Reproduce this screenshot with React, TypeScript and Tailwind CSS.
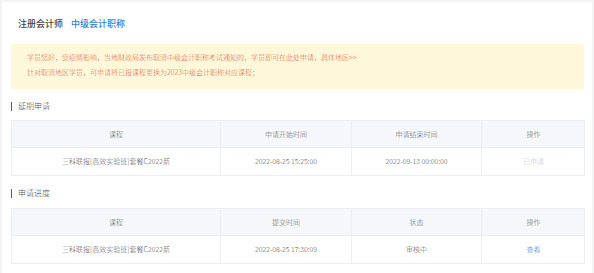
import React from "react";

const cols = "grid grid-cols-[209px_131px_130px_103px]";

function Table({
  headers,
  row,
  last,
}: {
  headers: string[];
  row: string[];
  last: React.ReactNode;
}) {
  return (
    <div className="border border-[#ebeef5] w-[574px]">
      <div className={`${cols} h-[27px] bg-[#f5f7fa] border-b border-[#ebeef5]`}>
        {headers.map((h, i) => (
          <div
            key={i}
            className={`flex items-center justify-center text-[7px] font-light text-[#666] ${
              i < 3 ? "border-r border-[#ebeef5]" : ""
            }`}
          >
            {h}
          </div>
        ))}
      </div>
      <div className={`${cols} h-[27px]`}>
        {row.map((c, i) => (
          <div
            key={i}
            className="flex items-center justify-center text-[7px] font-light text-[#555] border-r border-[#ebeef5]"
          >
            {c}
          </div>
        ))}
        <div className="flex items-center justify-center text-[7px] font-light">{last}</div>
      </div>
    </div>
  );
}

function Heading({ text }: { text: string }) {
  return (
    <div className="flex items-center h-[10px]">
      <div className="w-[1px] h-[9px] bg-[#1d6cc0]" />
      <span className="ml-[6px] text-[8px] font-light leading-[10px] text-[#555]">{text}</span>
    </div>
  );
}

export default function App() {
  return (
    <div
      className="w-[594px] h-[273px] bg-[#f4f4f5] pt-[2px] pl-[2px] pr-[2px] overflow-hidden"
      style={{ fontFamily: '"Noto Sans CJK SC", "Noto Sans", sans-serif' }}
    >
      <div className="bg-white h-[271px] pl-[9px]">
        <div className="pt-[16px] pl-[7px] flex items-center h-[28px] leading-[12px]">
          <span className="text-[9px] font-medium text-[#444]">注册会计师</span>
          <span className="ml-[8px] text-[9px] font-medium text-[#2f7fd4]">中级会计职称</span>
        </div>
        <div className="mt-[14px] w-[573px] h-[45px] bg-[#fef7d9] rounded-[3px] pl-[16px] pt-[6px] text-[7px] font-light leading-[15px] text-[#e06a50]">
          <div>学员您好，受疫情影响，当地财政局发布取消中级会计职称考试通知的，学员即可在此处申请，具体地区&gt;&gt;</div>
          <div>针对取消地区学员，可申请将已报课程更换为2023中级会计职称对应课程；</div>
        </div>
        <div className="mt-[12px]">
          <Heading text="延期申请" />
        </div>
        <div className="mt-[9px]">
          <Table
            headers={["课程", "申请开始时间", "申请结束时间", "操作"]}
            row={["三科联报[高效实验班]套餐C2022新", "2022-08-25 15:25:00", "2022-09-13 00:00:00"]}
            last={<span className="text-[#c0c4cc]">已申请</span>}
          />
        </div>
        <div className="mt-[12px]">
          <Heading text="申请进度" />
        </div>
        <div className="mt-[10px]">
          <Table
            headers={["课程", "提交时间", "状态", "操作"]}
            row={["三科联报[高效实验班]套餐C2022新", "2022-08-25 17:30:09", "审核中"]}
            last={<span className="text-[#2f7fd4]">查看</span>}
          />
        </div>
      </div>
    </div>
  );
}
